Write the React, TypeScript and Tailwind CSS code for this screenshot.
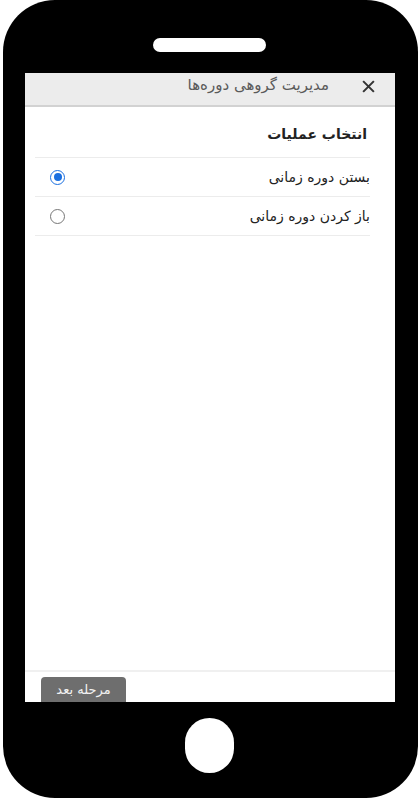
import { useState } from "react";

const OPTIONS = [
  { id: "close", label: "بستن دوره زمانی" },
  { id: "open", label: "باز کردن دوره زمانی" },
];

// ── Radio ─────────────────────────────────────────
const Radio = ({ checked }: { checked: boolean }) => (
  <span
    className={`w-[15px] h-[15px] rounded-full flex items-center justify-center shrink-0 border-[1.5px] ${
      checked ? "border-[#1a6fe0]" : "border-[#767676]"
    }`}
  >
    {checked && <span className="w-[8px] h-[8px] rounded-full bg-[#1a6fe0]" />}
  </span>
);

// ── App ───────────────────────────────────────────
export default function App() {
  const [value, setValue] = useState("close");

  return (
    <div className="w-[420px] h-[800px] bg-white" style={{ fontFamily: "'DejaVu Sans', sans-serif" }}>
      <div className="ml-[3px] w-[415px] h-[798px] bg-black rounded-[52px] flex flex-col">
        {/* Speaker */}
        <div className="h-[73px] flex items-start justify-center pt-[38px] pr-[2px]">
          <div className="w-[113px] h-[14px] rounded-full bg-white" />
        </div>

        {/* Screen */}
        <div dir="rtl" className="ml-[22px] w-[370px] h-[629px] bg-white flex flex-col overflow-hidden">
          {/* Header */}
          <div className="h-[34px] bg-[#ececec] border-b-2 border-[#d2d2d2] flex items-start pt-[2px] pr-[20px] gap-[33px] shrink-0">
            <svg width="13" height="13" viewBox="0 0 14 14" className="mt-[5px]">
              <path d="M2 2L12 12M12 2L2 12" stroke="#333" strokeWidth="2.2" strokeLinecap="square" />
            </svg>
            <span className="text-[15px] text-[#5a5a5a] leading-[20px]">مدیریت گروهی دوره‌ها</span>
          </div>

          {/* Body */}
          <div className="flex-1 flex flex-col">
            <div className="pr-[28px] pt-[16px] pb-[12px] text-[14px] font-bold text-[#222] leading-[22px]">
              انتخاب عملیات
            </div>
            <ul className="mr-[25px] ml-[10px] border-t border-[#ececec]">
              {OPTIONS.map(({ id, label }) => (
                <li
                  key={id}
                  onClick={() => setValue(id)}
                  className="h-[39px] border-b border-[#ececec] flex items-center justify-between pl-[15px]"
                >
                  <span className="text-[14px] text-[#222]">{label}</span>
                  <Radio checked={value === id} />
                </li>
              ))}
            </ul>
          </div>

          {/* Footer */}
          <div className="h-[32px] border-t-2 border-[#f0f0f0] flex items-start justify-end pl-[16px] pt-[5px] shrink-0">
            <button
              type="button"
              className="w-[85px] h-[32px] bg-[#6e6e6e] text-[#f2f2f2] text-[13px] rounded-[4px] pb-[6px]"
            >
              مرحله بعد
            </button>
          </div>
        </div>

        {/* Home button */}
        <div className="flex-1 flex items-center justify-center pb-[10px] pr-[2px]">
          <div className="w-[49px] h-[55px] rounded-full bg-white" />
        </div>
      </div>
    </div>
  );
}
